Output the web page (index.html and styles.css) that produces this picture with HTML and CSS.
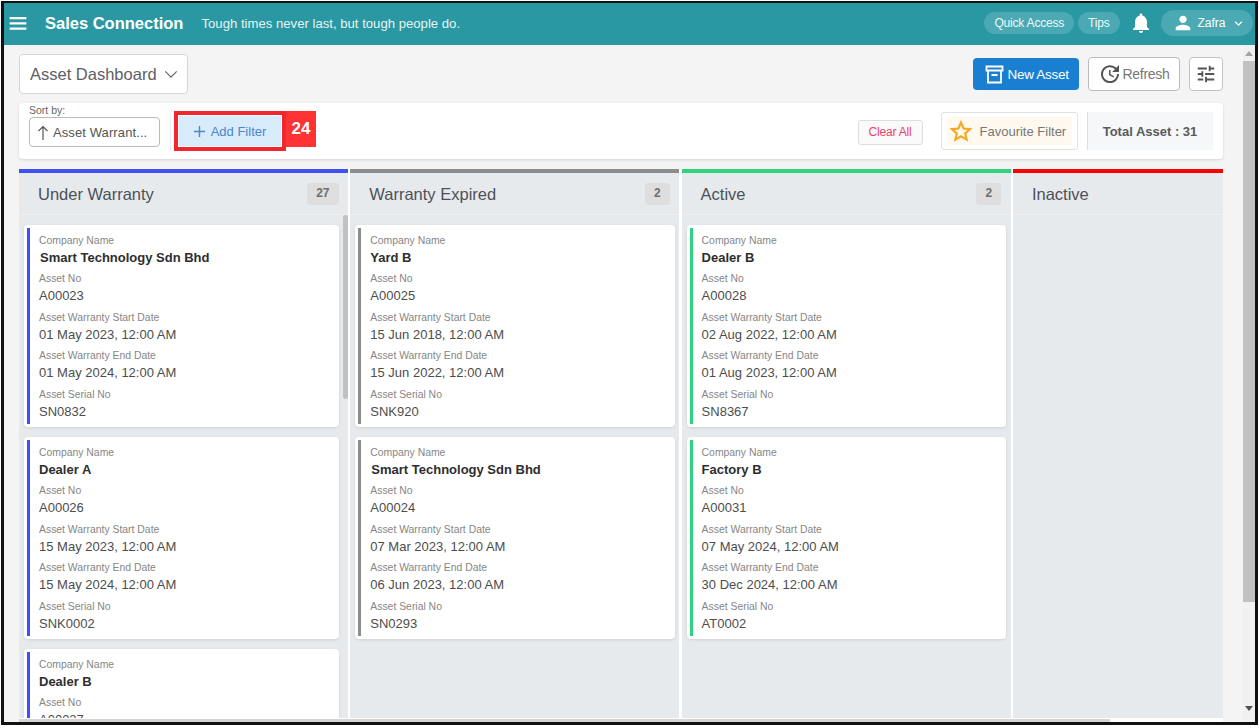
FILE: index.html
```html
<!DOCTYPE html>
<html lang="en">
<head>
<meta charset="utf-8">
<title>Asset Dashboard</title>
<link rel="stylesheet" href="styles.css">
</head>
<body>
<div class="frame">
  <header class="topbar">
    <svg class="ic-menu" viewBox="0 0 18 14"><path d="M0 0h18v2.4H0zM0 5.6h18V8H0zM0 11.2h18v2.4H0z"/></svg>
    <span class="brand">Sales Connection</span>
    <span class="quote">Tough times never last, but tough people do.</span>
    <div class="top-right">
      <span class="pill">Quick Access</span>
      <span class="pill">Tips</span>
      <svg class="ic-bell" viewBox="0 0 24 24"><path d="M12 22c1.1 0 2-.9 2-2h-4c0 1.1.89 2 2 2zm6-6v-5c0-3.07-1.64-5.64-4.5-6.32V4c0-.83-.67-1.5-1.5-1.5s-1.5.67-1.5 1.5v.68C7.63 5.36 6 7.92 6 11v5l-2 2v1h16v-1l-2-2z"/></svg>
      <span class="user">
        <svg class="ic-person" viewBox="0 0 24 24"><path d="M12 12c2.21 0 4-1.79 4-4s-1.79-4-4-4-4 1.79-4 4 1.79 4 4 4zm0 2c-2.67 0-8 1.34-8 4v2h16v-2c0-2.66-5.33-4-8-4z"/></svg>
        <span>Zafra</span>
        <svg class="ic-chev-w" viewBox="0 0 24 24"><path d="M16.59 8.59L12 13.17 7.41 8.59 6 10l6 6 6-6z"/></svg>
      </span>
    </div>
  </header>
  <div class="body-row">
    <main class="content">
      <div class="toolbar">
        <button class="view-select"><span>Asset Dashboard</span>
          <svg class="ic-chev" viewBox="0 0 16 10"><path d="M1.5 1.5L8 8l6.5-6.5" fill="none" stroke="#666" stroke-width="1.4"/></svg>
        </button>
        <div class="tool-right">
          <button class="btn-new">
            <svg class="ic-archive" viewBox="0 0 19 19"><path d="M1.5 1.5h16v4h-16zM3 5.5v12h13v-12M6.5 10h6" fill="none" stroke="#fff" stroke-width="1.8"/></svg>
            New Asset</button>
          <button class="btn-refresh">
            <svg class="ic-refresh" viewBox="0 0 24 24"><path d="M21 10.12h-6.78l2.74-2.82c-2.73-2.7-7.15-2.8-9.88-.1-2.73 2.71-2.73 7.08 0 9.79s7.15 2.71 9.88 0C18.32 15.65 19 14.08 19 12.1h2c0 1.98-.88 4.55-2.64 6.29-3.51 3.48-9.21 3.48-12.72 0-3.5-3.47-3.53-9.11-.02-12.58s9.14-3.47 12.65 0L21 3v7.12zM12.5 8v4.25l3.5 2.08-.72 1.21L11 13V8h1.5z"/></svg>
            Refresh</button>
          <button class="btn-tune">
            <svg class="ic-tune" viewBox="0 0 24 24"><path d="M3 17v2h6v-2H3zM3 5v2h10V5H3zm10 16v-2h8v-2h-8v-2h-2v6h2zM7 9v2H3v2h4v2h2V9H7zm14 4v-2H11v2h10zm-6-4h2V7h4V5h-4V3h-2v6z"/></svg>
          </button>
        </div>
      </div>
      <section class="filterbar">
        <div class="sort">
          <span class="sort-label">Sort by:</span>
          <button class="sort-btn">
            <svg class="ic-up" viewBox="0 0 12 15"><path d="M6 15V1.5M1.5 6L6 1.5 10.5 6" fill="none" stroke="#555" stroke-width="1.2"/></svg>
            Asset Warrant...</button>
        </div>
        <div class="sep"></div>
        <div class="callout">
          <button class="add-filter">
            <svg class="ic-add" viewBox="0 0 12 12"><path d="M5.25 0h1.5v5.25H12v1.5H6.75V12h-1.5V6.75H0v-1.5h5.25z"/></svg>
            Add Filter</button>
          <span class="callout-num">24</span>
        </div>
        <div class="filter-right">
          <button class="clear">Clear All</button>
          <div class="fav-wrap">
            <div class="fav">
              <svg class="ic-star" viewBox="0 0 24 24"><path d="M12 3.6l2.6 5.9 6.4.6-4.8 4.2 1.4 6.3-5.6-3.3-5.6 3.3 1.4-6.3L3 10.100l6.400-.6z" fill="none" stroke="#f7a823" stroke-width="2.200"/></svg>
              Favourite Filter
            </div>
          </div>
          <div class="total">Total Asset : 31</div>
        </div>
      </section>
      <div class="board">
        <section class="col col-first c-blue">
          <div class="col-head"><span class="col-title">Under Warranty</span><span class="count">27</span></div>
          <div class="col-body">
            <article class="card"><div class="card-in">
              <div class="f"><div class="l">Company Name</div><div class="n ind">Smart Technology Sdn Bhd</div></div>
              <div class="f"><div class="l">Asset No</div><div class="v">A00023</div></div>
              <div class="f"><div class="l">Asset Warranty Start Date</div><div class="v">01 May 2023, 12:00 AM</div></div>
              <div class="f"><div class="l">Asset Warranty End Date</div><div class="v">01 May 2024, 12:00 AM</div></div>
              <div class="f"><div class="l">Asset Serial No</div><div class="v">SN0832</div></div>
            </div></article>
            <article class="card"><div class="card-in">
              <div class="f"><div class="l">Company Name</div><div class="n">Dealer A</div></div>
              <div class="f"><div class="l">Asset No</div><div class="v">A00026</div></div>
              <div class="f"><div class="l">Asset Warranty Start Date</div><div class="v">15 May 2023, 12:00 AM</div></div>
              <div class="f"><div class="l">Asset Warranty End Date</div><div class="v">15 May 2024, 12:00 AM</div></div>
              <div class="f"><div class="l">Asset Serial No</div><div class="v">SNK0002</div></div>
            </div></article>
            <article class="card"><div class="card-in">
              <div class="f"><div class="l">Company Name</div><div class="n">Dealer B</div></div>
              <div class="f"><div class="l">Asset No</div><div class="v">A00027</div></div>
            </div></article>
            <div class="col-thumb"></div>
          </div>
        </section>
        <section class="col c-grey">
          <div class="col-head"><span class="col-title">Warranty Expired</span><span class="count">2</span></div>
          <div class="col-body">
            <article class="card"><div class="card-in">
              <div class="f"><div class="l">Company Name</div><div class="n">Yard B</div></div>
              <div class="f"><div class="l">Asset No</div><div class="v">A00025</div></div>
              <div class="f"><div class="l">Asset Warranty Start Date</div><div class="v">15 Jun 2018, 12:00 AM</div></div>
              <div class="f"><div class="l">Asset Warranty End Date</div><div class="v">15 Jun 2022, 12:00 AM</div></div>
              <div class="f"><div class="l">Asset Serial No</div><div class="v">SNK920</div></div>
            </div></article>
            <article class="card"><div class="card-in">
              <div class="f"><div class="l">Company Name</div><div class="n ind">Smart Technology Sdn Bhd</div></div>
              <div class="f"><div class="l">Asset No</div><div class="v">A00024</div></div>
              <div class="f"><div class="l">Asset Warranty Start Date</div><div class="v">07 Mar 2023, 12:00 AM</div></div>
              <div class="f"><div class="l">Asset Warranty End Date</div><div class="v">06 Jun 2023, 12:00 AM</div></div>
              <div class="f"><div class="l">Asset Serial No</div><div class="v">SN0293</div></div>
            </div></article>
          </div>
        </section>
        <section class="col c-green">
          <div class="col-head"><span class="col-title">Active</span><span class="count">2</span></div>
          <div class="col-body">
            <article class="card"><div class="card-in">
              <div class="f"><div class="l">Company Name</div><div class="n">Dealer B</div></div>
              <div class="f"><div class="l">Asset No</div><div class="v">A00028</div></div>
              <div class="f"><div class="l">Asset Warranty Start Date</div><div class="v">02 Aug 2022, 12:00 AM</div></div>
              <div class="f"><div class="l">Asset Warranty End Date</div><div class="v">01 Aug 2023, 12:00 AM</div></div>
              <div class="f"><div class="l">Asset Serial No</div><div class="v">SN8367</div></div>
            </div></article>
            <article class="card"><div class="card-in">
              <div class="f"><div class="l">Company Name</div><div class="n">Factory B</div></div>
              <div class="f"><div class="l">Asset No</div><div class="v">A00031</div></div>
              <div class="f"><div class="l">Asset Warranty Start Date</div><div class="v">07 May 2024, 12:00 AM</div></div>
              <div class="f"><div class="l">Asset Warranty End Date</div><div class="v">30 Dec 2024, 12:00 AM</div></div>
              <div class="f"><div class="l">Asset Serial No</div><div class="v">AT0002</div></div>
            </div></article>
          </div>
        </section>
        <section class="col col-last c-red">
          <div class="col-head"><span class="col-title">Inactive</span></div>
          <div class="col-body"></div>
        </section>
      </div>
      <div class="hscroll"><div class="hthumb"></div></div>
    </main>
    <aside class="vscroll">
      <span class="arrow-up"></span>
      <div class="vthumb"></div>
      <span class="arrow-down"></span>
    </aside>
  </div>
</div>
</body>
</html>
```

FILE: styles.css
```css
* { box-sizing: border-box; }
html, body { margin: 0; padding: 0; background: #fff; height: 100%; overflow: hidden; }
body { font-family: "Liberation Sans", Arial, sans-serif; color: #444; padding: 1px 1px 0 1px; }
button { font-family: inherit; cursor: pointer; }
svg { display: block; flex: none; }

.frame { width: 1257px; height: 724px; border: 3px solid #111; border-width: 2px 3px 3px 3px; display: flex; flex-direction: column; overflow: hidden; background: #f4f4f4; }

.topbar { height: 42px; flex: none; background: #2a98a3; color: #fff; display: flex; align-items: center; padding: 0 2.5px 1.5px 5px; }
.ic-menu { width: 18px; height: 13px; fill: #fff; margin-right: 18px; }
.brand { font-size: 16.5px; font-weight: 700; margin-right: 18px; }
.quote { font-size: 13.15px; color: #e6f4f5; }
.top-right { margin-left: auto; display: flex; align-items: center; }
.pill { height: 22px; line-height: 22px; padding: 0 10px; border-radius: 11px; background: #4aa9b2; font-size: 12px; letter-spacing: -.2px; margin-right: 4px; color: #eef8f8; }
.ic-bell { width: 24px; height: 24px; fill: #fff; margin: 0 8px 0 5px; }
.user { height: 26px; border-radius: 13px; background: #4aa9b2; display: flex; align-items: center; padding: 0 4px 0 11px; font-size: 12px; width: 92px; }
.ic-person { width: 22px; height: 22px; fill: #fff; margin-right: 4px; }
.ic-chev-w { width: 15px; height: 15px; fill: #fff; margin-left: 5px; }

.body-row { flex: 1; min-height: 0; display: flex; }
.content { flex: 1; min-width: 0; display: flex; flex-direction: column; padding: 9px 0 0 0; }

.toolbar { display: flex; justify-content: space-between; align-items: flex-start; margin: 0 20.500px 0 15px; height: 40px; }
.view-select { width: 169px; height: 40px; background: #fff; border: 1px solid #d6d6d6; border-radius: 4px; font-size: 16.5px; color: #5e6066; display: flex; align-items: center; padding: 0 9px 0 10px; justify-content: space-between; white-space: nowrap; }
.ic-chev { width: 14px; height: 9px; }
.tool-right { display: flex; align-items: center; padding-top: 3px; }
.btn-new { width: 106px; height: 32px; background: #1b7fd1; border: 0; border-radius: 4px; color: #fff; font-size: 13.5px; letter-spacing: -.3px; display: flex; align-items: center; padding: 0 0 0 12px; margin-right: 9px; }
.ic-archive { width: 19px; height: 19px; margin-right: 4px; }
.btn-refresh { width: 92px; height: 34px; background: #fff; border: 1px solid #bbb; border-radius: 4px; color: #777; font-size: 14px; letter-spacing: -.3px; display: flex; align-items: center; padding: 0 0 0 9px; margin-right: 9px; }
.ic-refresh { width: 24px; height: 24px; fill: #555; margin-right: 1px; }
.btn-tune { width: 34px; height: 34px; background: #fff; border: 1px solid #c4c4c4; border-radius: 4px; padding: 0; display: flex; align-items: center; justify-content: center; }
.ic-tune { width: 22px; height: 22px; fill: #555; }

.filterbar { margin: 9px 20.500px 0 15px; height: 56px; flex: none; background: #fff; border-radius: 4px; box-shadow: 0 1px 3px rgba(0,0,0,.12); display: flex; align-items: flex-start; }
.sort { margin-left: 10px; display: flex; flex-direction: column; width: 131px; }
.sort-label { font-size: 10.5px; line-height: 12px; color: #666; margin-top: 1px; }
.sort-btn { height: 30px; margin-top: 1px; background: #fff; border: 1px solid #bbb; border-radius: 4px; font-size: 13px; color: #555; letter-spacing: .1px; display: flex; align-items: center; padding: 0 0 0 7px; white-space: nowrap; }
.ic-up { width: 12px; height: 15px; margin-right: 4px; }
.sep { width: 1px; height: 38px; background: #eee; margin: 10px 0 0 10px; }
.callout { display: flex; align-items: flex-start; margin: 8px 0 0 3px; }
.add-filter { width: 112px; height: 40px; background: #d8ebfb; border: 4px solid #f0282d; outline: 1px solid #fff; outline-offset: -5px; border-radius: 0; color: #4a86c8; font-size: 13px; display: flex; align-items: center; justify-content: center; padding: 0; }
.ic-add { width: 11px; height: 11px; fill: #4a86c8; margin-right: 6px; }
.callout-num { width: 30px; height: 36px; background: #ff3333; color: #fff; font-weight: 700; font-size: 17px; line-height: 36px; text-align: center; }
.filter-right { margin-left: auto; display: flex; align-items: flex-start; padding: 9px 10px 0 0; }
.clear { width: 65px; height: 25px; margin-top: 8px; background: #fafafa; border: 1px solid #ddd; border-radius: 3px; font-size: 12px; letter-spacing: -.2px; color: #ee3f6c; padding: 0 0 2px; }
.fav-wrap { width: 137px; height: 38px; margin-left: 18px; border: 1px solid #e2e2e2; border-radius: 3px; padding: 4px 5px; background: #fff; }
.fav { height: 28px; background: #fff9f0; font-size: 13px; color: #777; display: flex; align-items: center; padding-left: 2px; white-space: nowrap; }
.ic-star { width: 24px; height: 24px; margin-right: 7px; }
.total { width: 126px; height: 38px; margin-left: 9px; border-left: 1px solid #ddd; background: #f6f7f9; font-size: 13px; font-weight: 700; color: #5a5a5a; display: flex; align-items: center; justify-content: center; }

.board { flex: 1; min-height: 0; margin: 10px 20.500px 0 15px; display: flex; overflow: hidden; background: #fff; }
.col { width: 329px; margin-right: 2.300px; flex: none; background: #e7eaed; border-top: 4.500px solid #888; display: flex; flex-direction: column; overflow: hidden; }
.col-last { flex: 1; width: auto; margin-right: 0; box-shadow: 1px 0 2px rgba(0,0,0,.1); }
.c-blue { border-top-color: #3f51f0; }
.c-grey { border-top-color: #8c8c8c; }
.c-green { border-top-color: #2fd27f; }
.c-red { border-top-color: #f60303; }
.col-head { height: 42px; flex: none; display: flex; align-items: center; justify-content: space-between; padding: 1px 9.500px 0 19px; border-bottom: 1px solid #edeff1; }
.col-title { font-size: 16.500px; color: #4d5157; }
.count { padding: 0 9px; height: 22px; background: #dedede; border-radius: 3px; font-size: 12px; font-weight: 700; line-height: 20px; text-align: center; color: #6e6e6e; }
.col-body { flex: 1; min-height: 0; padding: 9.500px 4.500px 0 5px; overflow: hidden; position: relative; }
.col-first .col-body { padding-right: 9.500px; }
.col-thumb { position: absolute; top: 0; right: 0; width: 5px; height: 184px; background: #c1c1c1; border-radius: 2px; }

.card { height: 202.500px; margin-bottom: 9.500px; background: #fff; border-radius: 4px; padding: 3px; box-shadow: 0 1px 3px rgba(0,0,0,.1); }
.card-in { height: 100%; padding: 4px 0 0 9px; border-left: 3px solid #888; }
.c-blue .card-in { border-left-color: #3f51f0; }
.c-grey .card-in { border-left-color: #8c8c8c; }
.c-green .card-in { border-left-color: #2fd27f; }
.f { height: 38.500px; padding-top: 1px; }
.l { font-size: 10.400px; line-height: 16px; color: #868686; }
.v { font-size: 13px; line-height: 18.500px; color: #4d4d4d; }
.n { font-size: 13px; line-height: 18.500px; font-weight: 700; color: #2e2e2e; }
.ind { padding-left: 1px; }

.hscroll { height: 4px; flex: none; background: #fff; margin: 0 20px 0 15px; }
.hthumb { width: 1091px; height: 3px; margin-top: 1px; background: #d4d4d4; }

.vscroll { width: 12px; flex: none; background: #f1f1f1; display: flex; flex-direction: column; align-items: center; }
.arrow-up { width: 0; height: 0; border: 4px solid transparent; border-top: 0; border-bottom: 5px solid #a3a3a3; margin-top: 6px; margin-bottom: 5px; }
.vthumb { width: 12px; height: 541px; background: #c1c1c1; }
.arrow-down { width: 0; height: 0; border: 4px solid transparent; border-bottom: 0; border-top: 5px solid #505050; margin-top: auto; margin-bottom: 11px; }
```
